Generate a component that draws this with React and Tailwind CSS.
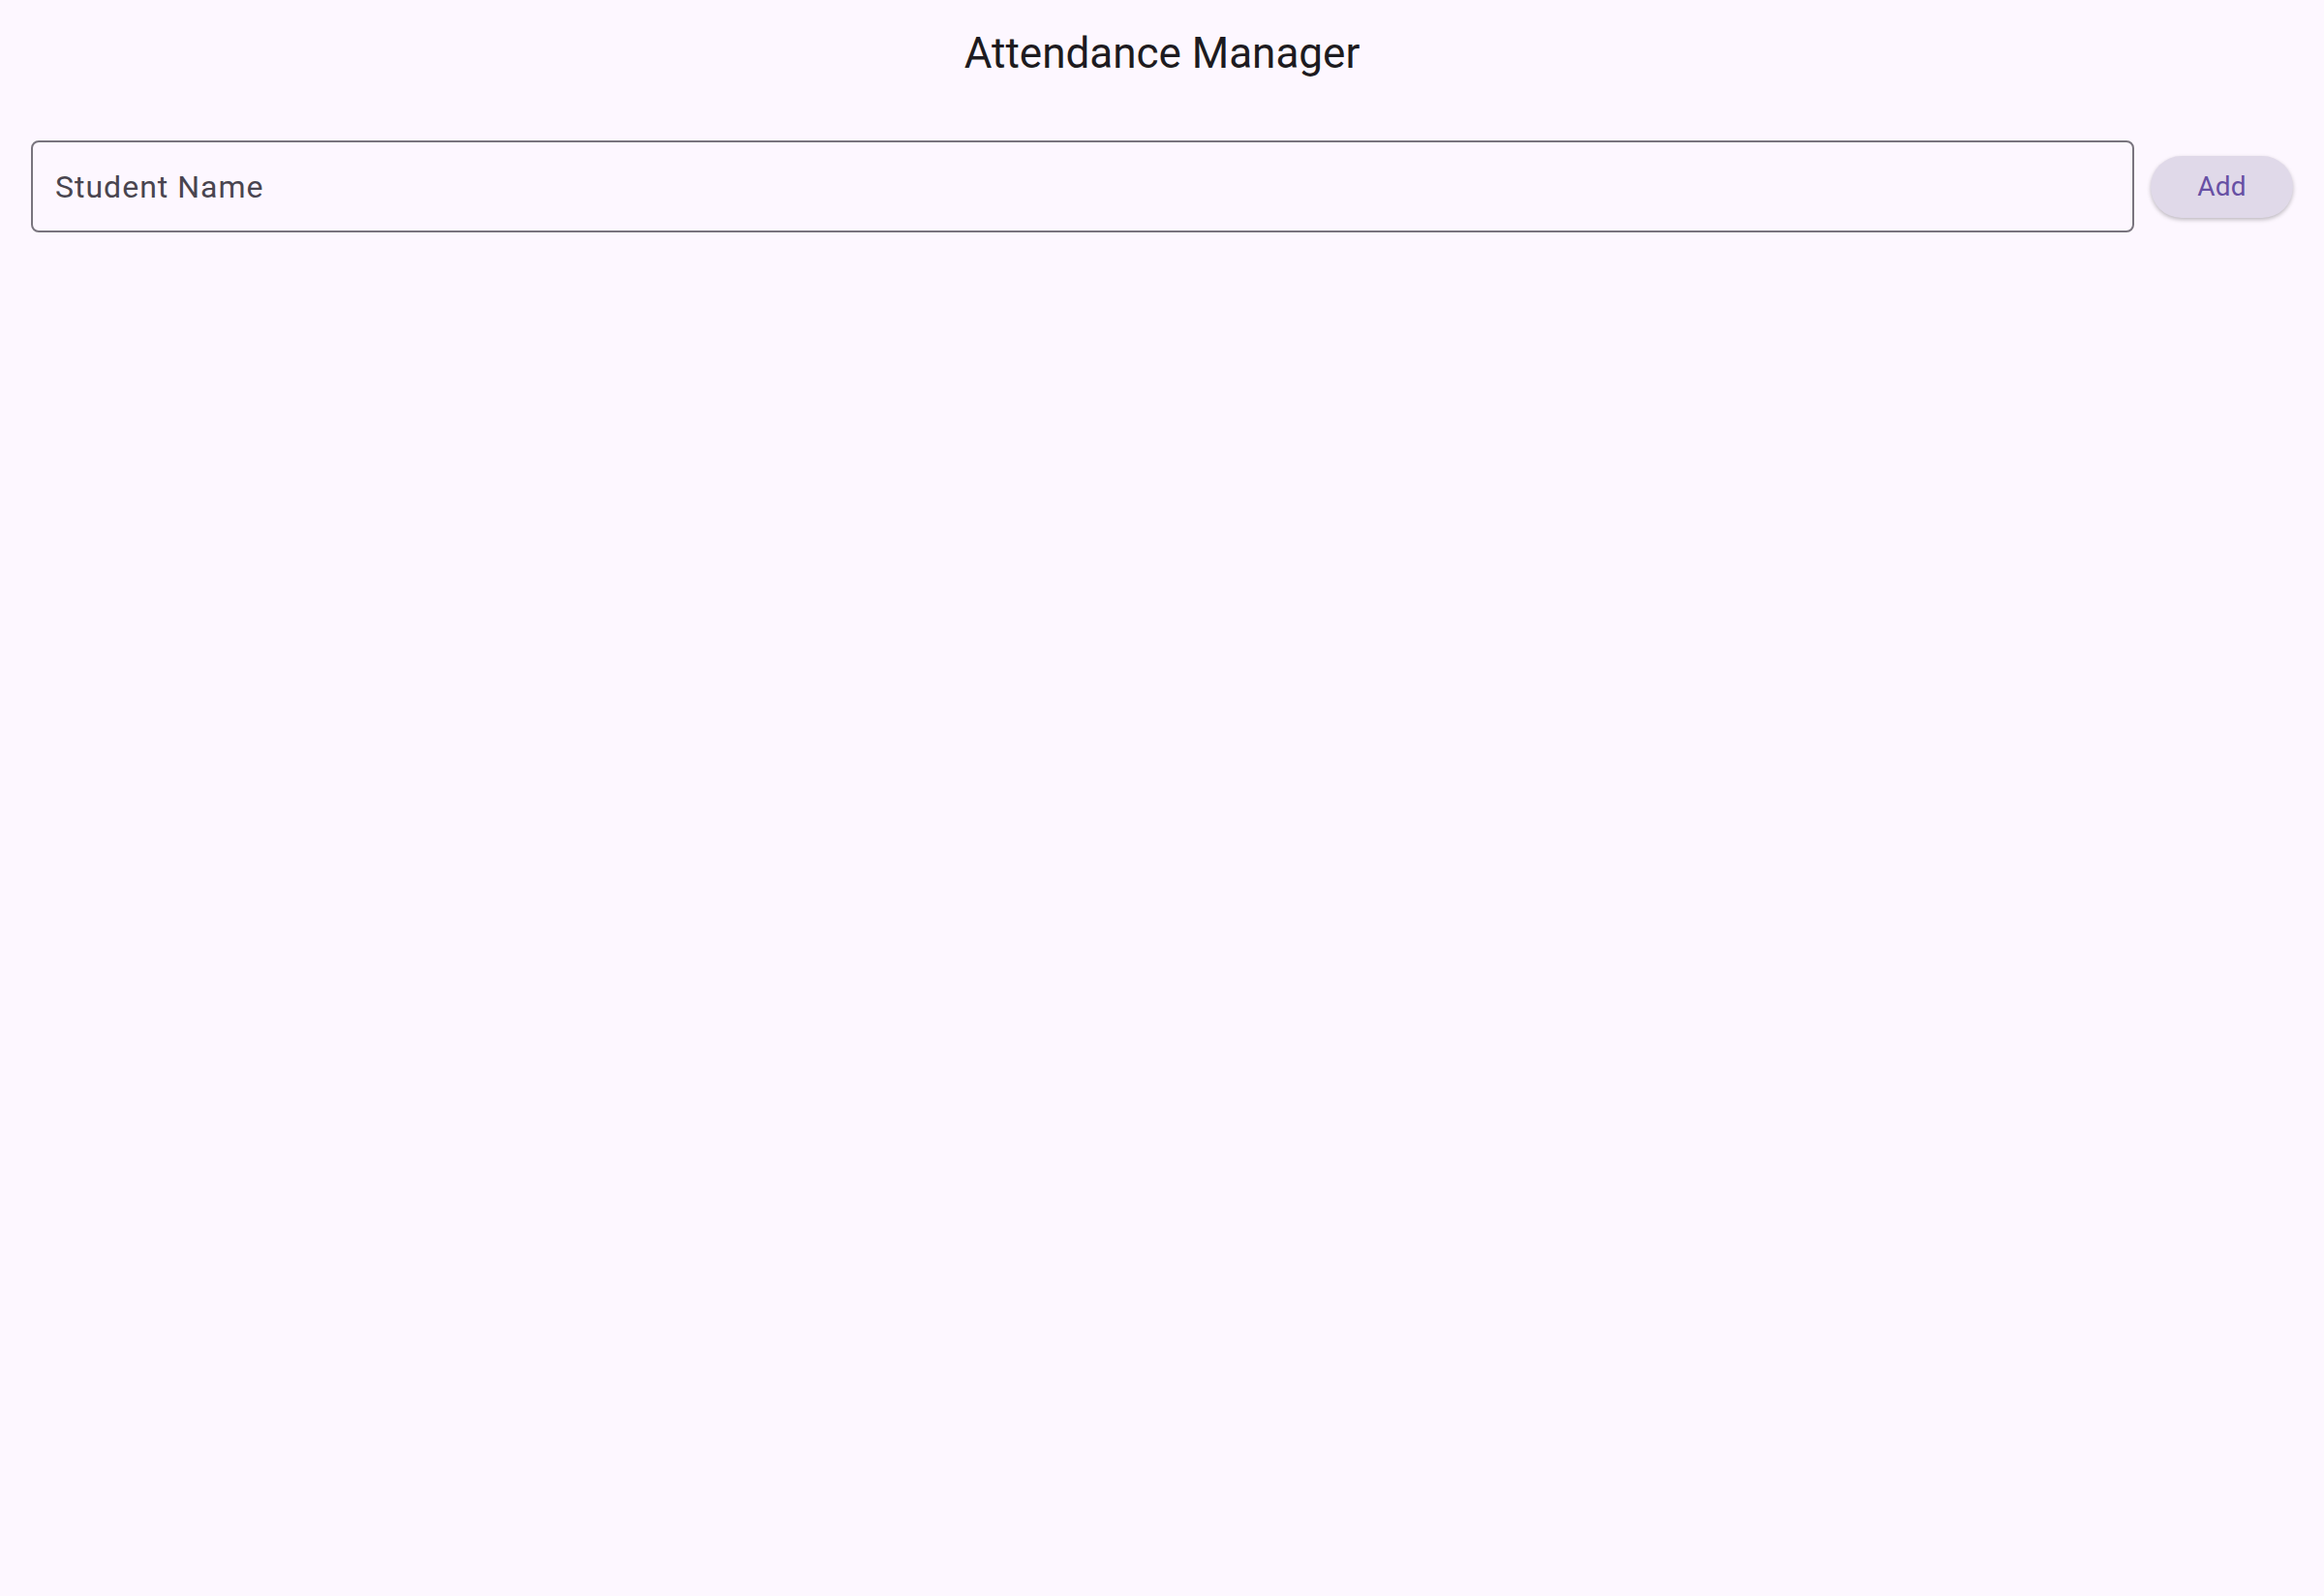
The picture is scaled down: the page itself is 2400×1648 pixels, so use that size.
export default function App() {
  return (
    <div className="min-h-screen w-full bg-[#fdf7ff] font-['Roboto',sans-serif]">
      <header className="h-[110px] flex items-center justify-center">
        <h1 className="text-[44px] leading-none text-[#1d1b20] font-normal">Attendance Manager</h1>
      </header>
      <main className="px-8 pt-[35px]">
        <div className="flex items-center gap-[17px]">
          <input
            type="text"
            placeholder="Student Name"
            className="flex-1 h-[95px] rounded-[8px] border-2 border-[#79747e] bg-transparent px-[23px] text-[32px] tracking-[1px] text-[#1d1b20] placeholder:text-[#49454f] outline-none"
          />
          <button className="w-[147px] h-[64px] rounded-full bg-[#e0d9e9] text-[28px] text-[#6750a4] tracking-[0.2px] shadow-[0_2px_4px_rgba(0,0,0,0.25)]">
            Add
          </button>
        </div>
      </main>
    </div>
  )
}
